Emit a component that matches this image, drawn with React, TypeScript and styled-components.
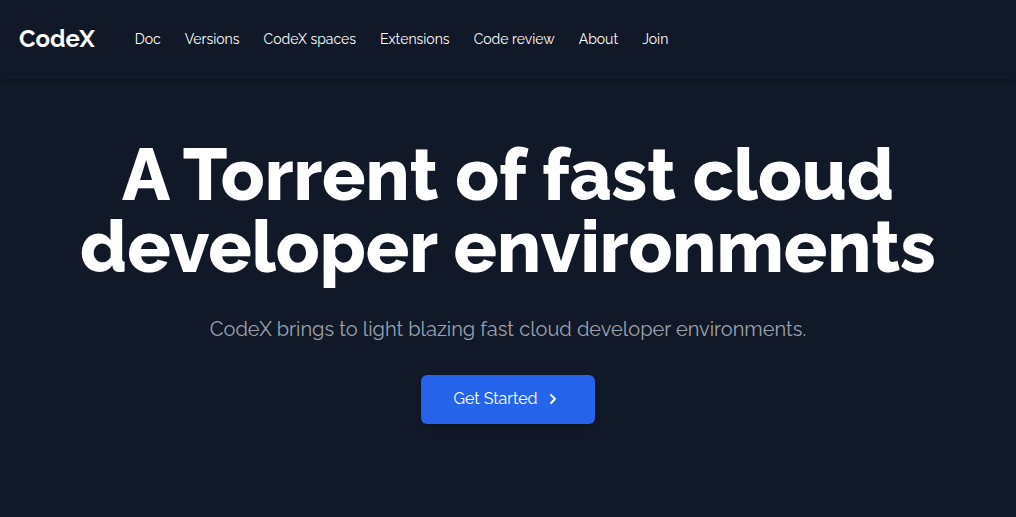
import React from "react";
import styled, { createGlobalStyle } from "styled-components";

const sans = `Raleway, Lato, "Open Sans", sans-serif`;
const raised = "0 4px 6px -1px rgba(0, 0, 0, 0.1), 0 2px 4px -1px rgba(0, 0, 0, 0.06)";

const GlobalStyle = createGlobalStyle`
  *, *::before, *::after { box-sizing: border-box; }
  body {
    margin: 0;
    background: #111827;
    color: #ffffff;
    font-family: ${sans};
  }
`;

const Page = styled.div`
  min-height: 100vh;
  background: #111827;
`;

const Header = styled.header`
  display: flex;
  align-items: center;
  padding: 23px 19px 24px;
  gap: 40px;
  box-shadow: ${raised};
`;

const Brand = styled.a`
  color: #ffffff;
  font-size: 24px;
  line-height: 32px;
  font-weight: 700;
  text-decoration: none;
`;

const Nav = styled.nav`
  display: flex;
  gap: 24px;
`;

const NavLink = styled.a`
  color: #ffffff;
  font-size: 14px;
  line-height: 20px;
  font-weight: 400;
  white-space: nowrap;
  text-decoration: none;
`;

const Hero = styled.main`
  display: flex;
  flex-direction: column;
  align-items: center;
  padding: 60px 40px 92px;
  text-align: center;
`;

const Title = styled.h1`
  max-width: 896px;
  margin: 0;
  font-size: 72px;
  line-height: 72px;
  font-weight: 800;
`;

const Lead = styled.p`
  margin: 32px 0;
  color: #9ca3af;
  font-size: 20px;
  line-height: 28px;
`;

const StartButton = styled.button`
  display: flex;
  align-items: center;
  gap: 5px;
  padding: 12px 32px 13px;
  border: 0;
  border-radius: 6px;
  background: #2563eb;
  color: #ffffff;
  font-family: inherit;
  font-size: 16px;
  line-height: 24px;
  font-weight: 400;
  box-shadow: ${raised};
`;

const links = ["Doc", "Versions", "CodeX spaces", "Extensions", "Code review", "About", "Join"];

export default function App() {
  return (
    <>
      <GlobalStyle />
      <Page>
        <Header>
          <Brand href="#">CodeX</Brand>
          <Nav>
            {links.map((label) => (
              <NavLink key={label} href="#">{label}</NavLink>
            ))}
          </Nav>
        </Header>
        <Hero>
          <Title>A Torrent of fast cloud developer environments</Title>
          <Lead>CodeX brings to light blazing fast cloud developer environments.</Lead>
          <StartButton type="button">
            Get Started
            <svg width="20" height="20" viewBox="0 0 20 20" fill="currentColor" aria-hidden="true">
              <path fillRule="evenodd" clipRule="evenodd" d="M7.293 14.707a1 1 0 010-1.414L10.586 10 7.293 6.707a1 1 0 011.414-1.414l4 4a1 1 0 010 1.414l-4 4a1 1 0 01-1.414 0z" />
            </svg>
          </StartButton>
        </Hero>
      </Page>
    </>
  );
}
